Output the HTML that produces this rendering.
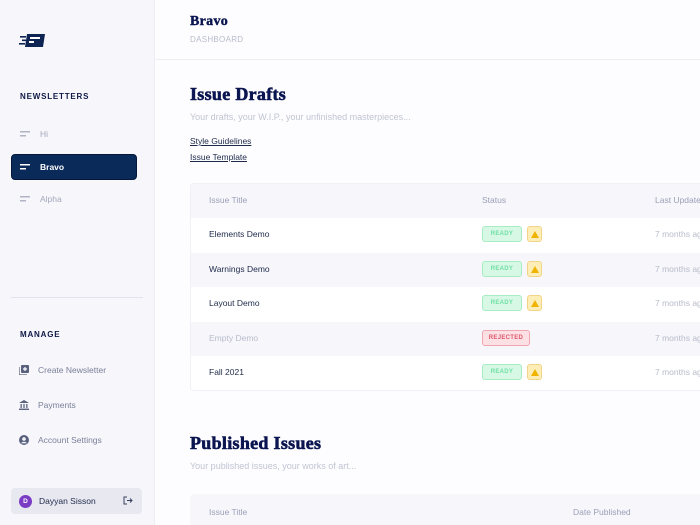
<!DOCTYPE html>
<html><head><meta charset="utf-8"><style>
*{margin:0;padding:0;box-sizing:border-box}
html,body{width:700px;height:525px;overflow:hidden}
body{font-family:"Liberation Sans",sans-serif;background:#fdfdff;position:relative}
.side{position:absolute;left:0;top:0;width:155px;height:525px;background:#f6f6fb;border-right:1px solid #ececf3}
.a{position:absolute;white-space:nowrap}
.lbl{font-size:8px;font-weight:bold;letter-spacing:.8px;color:#0e1a45}
.nav{font-size:8.5px;color:#7a8098}
.ser{font-family:"Liberation Serif",serif;font-weight:bold;color:#0b1550;-webkit-text-stroke:.6px #0b1550;letter-spacing:.3px}
.th{font-size:8.5px;color:#9aa0b6}
.td{font-size:8.5px;color:#1f2a4a}
.tm{font-size:8.5px;color:#b8bccb}
.ready{position:absolute;width:40px;height:16px;border:1px solid #a6ecc4;background:#d8f8e6;border-radius:3px;color:#6fe0a3;font-size:6px;font-weight:bold;display:flex;align-items:center;justify-content:center;letter-spacing:.3px}
.warn{position:absolute;width:15px;height:16px;border:1px solid #f2d488;background:#fdeeb8;border-radius:3px}
.warn svg{position:absolute;left:3px;top:4px}
</style></head><body>
<div class="side">
<svg class="a" style="left:19px;top:33px" width="27" height="15" viewBox="0 0 27 15"><path d="M8 1h18l-2 13H6z" fill="#0e2452"/><rect x="11" y="4" width="10" height="2" fill="#fff"/><rect x="10" y="8" width="5" height="2" fill="#fff"/><rect x="1" y="3" width="6" height="1.6" fill="#0e2452"/><rect x="3" y="6.5" width="4" height="1.6" fill="#0e2452"/><rect x="0" y="10" width="6" height="1.6" fill="#0e2452"/></svg>
<div class="a lbl" style="left:20px;top:92px">NEWSLETTERS</div>
<svg class="a" style="left:20px;top:131px" width="10" height="6"><rect width="10" height="1.5" fill="#b0b4c4"/><rect y="4" width="6" height="1.5" fill="#b0b4c4"/></svg>
<div class="a nav" style="left:40px;top:129px;color:#a4a8ba">Hi</div>
<div class="a" style="left:11px;top:154px;width:126px;height:26px;background:#0a2a5a;border-radius:4px;border:1px solid #06183a"></div>
<svg class="a" style="left:20px;top:164px" width="10" height="6"><rect width="10" height="1.5" fill="#fff"/><rect y="4" width="6" height="1.5" fill="#fff"/></svg>
<div class="a nav" style="left:40px;top:162px;color:#fff;font-weight:bold">Bravo</div>
<svg class="a" style="left:20px;top:196px" width="10" height="6"><rect width="10" height="1.5" fill="#b0b4c4"/><rect y="4" width="6" height="1.5" fill="#b0b4c4"/></svg>
<div class="a nav" style="left:40px;top:194px;color:#a4a8ba">Alpha</div>
<div class="a" style="left:11px;top:297px;width:132px;height:1px;background:#e2e3ec"></div>
<div class="a lbl" style="left:20px;top:330px">MANAGE</div>
<svg class="a" style="left:19px;top:365px" width="10" height="10" viewBox="0 0 10 10"><rect x="2" y="0" width="8" height="8" rx="1" fill="#5a6280"/><path d="M0 2v8h8" stroke="#5a6280" fill="none" stroke-width="1.2"/><path d="M6 2v4M4 4h4" stroke="#fff" stroke-width="1.2"/></svg>
<div class="a nav" style="left:38px;top:365px">Create Newsletter</div>
<svg class="a" style="left:19px;top:400px" width="10" height="10" viewBox="0 0 10 10"><path d="M0 3L5 0l5 3z" fill="#5a6280"/><rect x="1.5" y="4" width="1.3" height="4" fill="#5a6280"/><rect x="4.35" y="4" width="1.3" height="4" fill="#5a6280"/><rect x="7.2" y="4" width="1.3" height="4" fill="#5a6280"/><rect y="8.6" width="10" height="1.4" fill="#5a6280"/></svg>
<div class="a nav" style="left:38px;top:400px">Payments</div>
<svg class="a" style="left:19px;top:435px" width="10" height="10" viewBox="0 0 10 10"><circle cx="5" cy="5" r="5" fill="#5a6280"/><circle cx="5" cy="4" r="1.8" fill="#f6f6fb"/><path d="M2 8.3c1.5-2 4.5-2 6 0" fill="#f6f6fb"/></svg>
<div class="a nav" style="left:38px;top:435px">Account Settings</div>
<div class="a" style="left:11px;top:488px;width:131px;height:26px;background:#e7e8f0;border-radius:4px"></div>
<div class="a" style="left:19px;top:495px;width:13px;height:13px;border-radius:50%;background:#7b3cc4;color:#fff;font-size:6.5px;display:flex;align-items:center;justify-content:center;font-weight:bold">D</div>
<div class="a nav" style="left:39px;top:496px;color:#1f2a4a">Dayyan Sisson</div>
<svg class="a" style="left:123px;top:496px" width="10" height="9" viewBox="0 0 10 9"><path d="M4 1H1v7h3" stroke="#3a4260" fill="none" stroke-width="1"/><path d="M4 4.5h5M7 2.5l2 2-2 2" stroke="#3a4260" fill="none" stroke-width="1"/></svg>
</div>
<div class="a ser" style="left:190px;top:14px;font-size:14px;-webkit-text-stroke:.4px #0b1550">Bravo</div>
<div class="a" style="left:190px;top:35px;font-size:8px;color:#b8bccb;letter-spacing:.3px">DASHBOARD</div>
<div class="a" style="left:156px;top:59px;width:544px;height:1px;background:#ececf3"></div>
<div class="a ser" style="left:190px;top:84px;font-size:18px">Issue Drafts</div>
<div class="a" style="left:190px;top:112px;font-size:9px;color:#c0c4d2">Your drafts, your W.I.P., your unfinished masterpieces...</div>
<div class="a" style="left:190px;top:136px;font-size:8.5px;color:#1f2a4a;text-decoration:underline">Style Guidelines</div>
<div class="a" style="left:190px;top:152px;font-size:8.5px;color:#1f2a4a;text-decoration:underline">Issue Template</div>
<div class="a" style="left:190px;top:183px;width:520px;height:208px;border:1px solid #f0f0f6;border-radius:4px;overflow:hidden;background:#fff">
<div style="height:34px;background:#f6f6fb"></div>
<div style="height:35px;background:#fff"></div>
<div style="height:34px;background:#f6f6fb"></div>
<div style="height:35px;background:#fff"></div>
<div style="height:34px;background:#f6f6fb"></div>
<div style="height:35px;background:#fff"></div>
</div>
<div class="a th" style="left:209px;top:195px">Issue Title</div>
<div class="a th" style="left:482px;top:195px">Status</div>
<div class="a th" style="left:655px;top:195px">Last Updated</div>

<div class="a td" style="left:209px;top:229px">Elements Demo</div>
<div class="ready" style="left:482px;top:226px">READY</div>
<div class="warn" style="left:527px;top:226px"><svg width="8" height="7"><path d="M4 0l4 7H0z" fill="#f0b400"/></svg></div>
<div class="a tm" style="left:655px;top:229px">7 months ago</div>

<div class="a td" style="left:209px;top:264px">Warnings Demo</div>
<div class="ready" style="left:482px;top:261px">READY</div>
<div class="warn" style="left:527px;top:261px"><svg width="8" height="7"><path d="M4 0l4 7H0z" fill="#f0b400"/></svg></div>
<div class="a tm" style="left:655px;top:264px">7 months ago</div>

<div class="a td" style="left:209px;top:298px">Layout Demo</div>
<div class="ready" style="left:482px;top:295px">READY</div>
<div class="warn" style="left:527px;top:295px"><svg width="8" height="7"><path d="M4 0l4 7H0z" fill="#f0b400"/></svg></div>
<div class="a tm" style="left:655px;top:298px">7 months ago</div>

<div class="a td" style="left:209px;top:333px;color:#b8bccb">Empty Demo</div>
<div class="ready" style="left:482px;top:330px;width:48px;background:#fde0e4;border-color:#f0a6b0;color:#e0566a">REJECTED</div>
<div class="a tm" style="left:655px;top:333px">7 months ago</div>

<div class="a td" style="left:209px;top:367px">Fall 2021</div>
<div class="ready" style="left:482px;top:364px">READY</div>
<div class="warn" style="left:527px;top:364px"><svg width="8" height="7"><path d="M4 0l4 7H0z" fill="#f0b400"/></svg></div>
<div class="a tm" style="left:655px;top:367px">7 months ago</div>

<div class="a ser" style="left:190px;top:433px;font-size:18px">Published Issues</div>
<div class="a" style="left:190px;top:461px;font-size:9px;color:#c0c4d2">Your published issues, your works of art...</div>
<div class="a" style="left:190px;top:494px;width:510px;height:31px;background:#f6f6fb;border-radius:4px 0 0 0"></div>
<div class="a th" style="left:209px;top:507px">Issue Title</div>
<div class="a th" style="left:573px;top:507px">Date Published</div>
</body></html>
